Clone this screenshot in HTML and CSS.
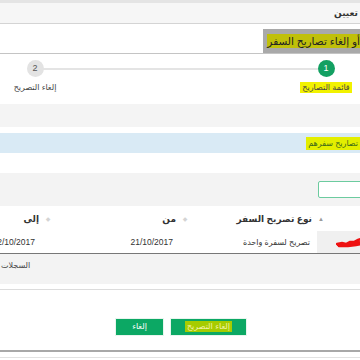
FILE: index.html
```html
<!DOCTYPE html>
<html lang="ar" dir="rtl">
<head>
<meta charset="utf-8">
<link rel="stylesheet" href="styles.css">
</head>
<body>
<div class="page">
  <div class="topline"></div>
  <div class="crumb"><span class="crumb-text">تعيين</span></div>
  <div class="titlebar">
    <div class="titlebox"><span class="hl-olive">أو إلغاء تصاريح السفر</span></div>
  </div>

  <div class="stepper">
    <div class="step">
      <div class="circle active">1</div>
      <div class="step-label"><span class="hl-yellow">قائمة التصاريح</span></div>
    </div>
    <div class="connector"></div>
    <div class="step">
      <div class="circle">2</div>
      <div class="step-label">إلغاء التصريح</div>
    </div>
  </div>

  <div class="band"></div>

  <div class="infobar"><span class="info-text"><span class="hl-info">تصاريح سفرهم</span></span></div>

  <div class="filterbar">
    <div class="search"></div>
  </div>

  <div class="thead">
    <div class="th"></div>
    <div class="th"><span class="sort asc">▲</span><span>نوع تصريح السفر</span></div>
    <div class="th"><span class="sort">◆</span><span>من</span></div>
    <div class="th"><span class="sort">◆</span><span>إلى</span></div>
  </div>
  <div class="trow">
    <div class="td sorted">
      <svg class="scribble" width="26" height="12" viewBox="0 0 26 12">
        <path d="M1 8 L6 7 L10 8 L14 6 L18 6 L22 4 L25 3 M2 9 L8 9 L13 8 L19 7 L25 6 M3 10 L12 10 L20 9 L25 8" stroke="#ee1111" stroke-width="2.5" fill="none" stroke-linecap="round"/>
      </svg>
    </div>
    <div class="td">تصريح لسفرة واحدة</div>
    <div class="td num">21/10/2017</div>
    <div class="td num">22/10/2017</div>
  </div>
  <div class="tfoot"><span class="foot-text">السجلات</span></div>

  <div class="actions">
    <button class="btn"><span class="hl-btn">إلغاء التصريح</span></button>
    <button class="btn">إلغاء</button>
  </div>
  <div class="bottomline"></div>
</div>
</body>
</html>
```

FILE: styles.css
```css
* { box-sizing: border-box; }
html, body { margin: 0; padding: 0; background: #fff; }
body {
  font-family: "Liberation Sans", "DejaVu Sans", sans-serif;
  color: #333;
  width: 360px;
  height: 360px;
  overflow: hidden;
}
.page { width: 360px; overflow: hidden; }

.topline { height: 3px; background: #e4e4e4; }
.crumb {
  height: 21px;
  background: #f6f6f6;
  border-bottom: 1px solid #d4d4d4;
  font-size: 9px;
  line-height: 20px;
  font-weight: bold;
  color: #333;
  overflow: hidden;
  white-space: nowrap;
  padding-right: 2px;
}

.titlebar {
  height: 30px;
  padding-top: 5px;
  border-bottom: 1px solid #c4c4c4;
  display: flex;
}
.titlebox {
  width: 97px;
  height: 24px;
  background: #a9a9a9;
  display: flex;
  align-items: center;
  overflow: hidden;
  white-space: nowrap;
  font-size: 10.5px;
  color: #222;
  padding-left: 4px;
}
.hl-olive { background: #c0c00a; padding: 1px 0; }

.stepper {
  height: 50px;
  display: flex;
  padding: 0 4px 0 5px;
}
.step {
  width: 60px;
  display: flex;
  flex-direction: column;
  align-items: center;
  position: relative;
  z-index: 1;
}
.circle {
  margin-top: 6px;
  width: 17px;
  height: 17px;
  border-radius: 50%;
  background: #e3e3e3;
  color: #555;
  font-size: 9px;
  line-height: 17px;
  text-align: center;
}
.circle.active { background: #13a062; color: #fff; }
.step-label {
  margin-top: 5px;
  font-size: 8px;
  line-height: 12px;
  color: #444;
  white-space: nowrap;
}
.hl-yellow { background: #f2f200; padding: 1px 2px; }
.connector {
  flex: 1;
  height: 2px;
  margin: 14px -22px 0;
  background: #e4e4e4;
}

.band { height: 23px; background: #f4f4f4; }

.infobar {
  margin-top: 6px;
  height: 20px;
  background: #d9eaf5;
  display: flex;
  align-items: center;
  overflow: hidden;
  white-space: nowrap;
  font-size: 8px;
}
.hl-info { background: #e3ee00; color: #3d6a1a; padding: 2px 2px; }

.filterbar {
  margin-top: 20px;
  height: 33px;
  background: #f3f3f3;
  display: flex;
  align-items: center;
}
.search {
  width: 44px;
  height: 17px;
  margin-right: -2px;
  margin-top: -1px;
  background: #fff;
  border: 1px solid #6ccb9f;
  border-radius: 2px;
}

.thead {
  height: 25px;
  display: grid;
  grid-template-columns: 32px 136px 137px 55px;
  font-size: 9px;
  font-weight: bold;
  color: #333;
}
.th {
  display: flex;
  align-items: center;
  gap: 6px;
  padding-right: 4px;
  white-space: nowrap;
}
.sort { font-size: 6px; color: #d4d4d4; width: 6px; text-align: center; font-weight: normal; }
.sort.asc { color: #9a9a9a; }

.trow {
  height: 23px;
  display: grid;
  grid-template-columns: 43px 137px 138px 42px;
  border-bottom: 1px solid #777;
  font-size: 8px;
  color: #333;
}
.td {
  display: flex;
  align-items: center;
  padding-right: 7px;
  white-space: nowrap;
  overflow: hidden;
}
.td.num { font-size: 8.5px; direction: ltr; justify-content: flex-end; }
.td.sorted { background: #f0f0f0; padding-right: 0; }
.scribble { margin-right: -2px; }

.tfoot {
  height: 30px;
  background: #f3f3f3;
  font-size: 8px;
  line-height: 24px;
  color: #444;
  white-space: nowrap;
  display: flex;
  justify-content: flex-end;
  padding-left: 1px;
}

.actions {
  margin-top: 5px;
  height: 61px;
  border-top: 1px solid #dcdcdc;
  display: flex;
  justify-content: center;
  align-items: flex-start;
  gap: 6px;
  padding-top: 28px;
  padding-left: 2px;
}
.btn {
  height: 18px;
  background: #0ca864;
  color: #fff;
  border: 1px solid #e8f5ee;
  font-family: "DejaVu Sans", sans-serif;
  font-size: 8px;
  padding: 0;
  line-height: 16px;
}
.actions .btn:first-child { width: 77px; }
.actions .btn:last-child { width: 49px; }
.hl-btn { background: #a6cc00; color: #f2f2a8; padding: 1px 2px; }

.bottomline {
  height: 8px;
  border-top: 2px solid #a8a8a8;
  border-bottom: 1px solid #e2e2e2;
}
```
